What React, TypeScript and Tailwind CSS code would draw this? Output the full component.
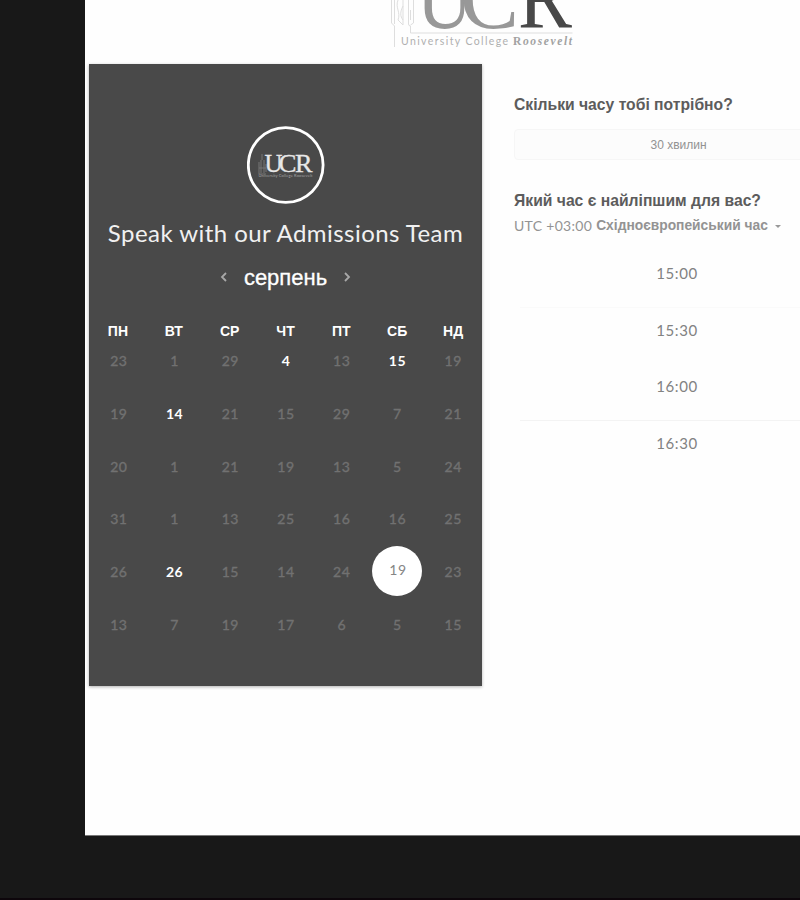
const weekdays = ['ПН', 'ВТ', 'СР', 'ЧТ', 'ПТ', 'СБ', 'НД'];

const weeks = [
  [23, 1, 29, 4, 13, 15, 19],
  [19, 14, 21, 15, 29, 7, 21],
  [20, 1, 21, 19, 13, 5, 24],
  [31, 1, 13, 25, 16, 16, 25],
  [26, 26, 15, 14, 24, 19, 23],
  [13, 7, 19, 17, 6, 5, 15],
];

const available = ['0-3', '0-5', '1-1', '4-1'];
const selected = '4-5';
const times = ['15:00', '15:30', '16:00', '16:30'];

const serif = "'Liberation Serif', serif";
const lato = 'Lato, sans-serif';

function Logo() {
  return (
    <svg className="block h-[52px] w-[200px]" viewBox="380 0 200 52">
      <g fill="none" stroke="#dedede" strokeWidth="1">
        <path d="M391.500 0v23l3 3v21M394.500 0v24M398 0c-3 8 3 12 0 20l5 5V0M403 6c-3 6-3 10 0 14M408.500 0v24q0 2 2 2v7h162M413.500 0v23l-3 2M410.500 10v10" />
      </g>
      <g fontFamily={serif}>
        <text x="416.500" y="27.500" fontSize="92" fill="#989898" textLength="56" lengthAdjust="spacingAndGlyphs">U</text>
        <text x="460" y="27.500" fontSize="92" fill="#989898" textLength="59" lengthAdjust="spacingAndGlyphs">C</text>
        <text x="518" y="28" fontSize="92" fill="#484848" textLength="54" lengthAdjust="spacingAndGlyphs">R</text>
      </g>
      <text x="401" y="45" fontSize="10.500" fontFamily={lato} fill="#b0b0b0" textLength="107">University College</text>
      <text x="513" y="45" fontSize="11.500" fontFamily={serif} fill="#a2a2a2" fontWeight="700" textLength="59">
        R<tspan fontStyle="italic">oosevelt</tspan>
      </text>
    </svg>
  );
}

function Badge() {
  return (
    <svg className="block h-[78px] w-[78px]" viewBox="246 126 78 78">
      <circle cx="284.700" cy="165" r="37.400" fill="none" stroke="#fff" strokeWidth="2.800" />
      <path d="M261 154v6M258 162v12M260 160v13M263 160v13M265 164v8M258 168h7M258 174h7" fill="none" stroke="#777" strokeWidth="1" />
      <g fontFamily={serif} fill="#e8e8e8" stroke="#e8e8e8" strokeWidth="0.300">
        <text x="263.500" y="171.500" fontSize="25" textLength="18" lengthAdjust="spacingAndGlyphs">U</text>
        <text x="277.500" y="171.500" fontSize="25" textLength="18" lengthAdjust="spacingAndGlyphs">C</text>
        <text x="294" y="171.500" fontSize="25" textLength="17.500" lengthAdjust="spacingAndGlyphs">R</text>
      </g>
      <text x="257.500" y="176.500" fontSize="4" fontFamily={lato} fill="#a5a5a5" textLength="54">University College Roosevelt</text>
    </svg>
  );
}

function Chevron({ d }: { d: string }) {
  return (
    <svg className="mb-[2px] h-3 w-2" viewBox="0 0 8 12" fill="none" stroke="#a8a8a8" strokeWidth="1.800">
      <path d={d} />
    </svg>
  );
}

function dayClass(key: string) {
  if (key === selected) return 'mb-px size-[50px] rounded-full bg-white pb-[3px] pl-px text-[#858585]';
  if (available.includes(key)) return 'font-bold text-white';
  return 'text-[#717171] [-webkit-text-stroke:0.35px_#717171]';
}

function Calendar() {
  return (
    <section className="flex h-[622px] w-[393px] shrink-0 flex-col items-center bg-[#494949] pt-[62px] shadow-[0_1px_3px_rgba(0,0,0,0.3)]">
      <Badge />
      <h1 className="mt-[13px] whitespace-nowrap font-[Lato,sans-serif] text-[24px] leading-8 tracking-[0.45px] text-[#f1f1f1]">
        Speak with our Admissions Team
      </h1>
      <div className="mt-[13px] flex h-8 items-center gap-4">
        <Chevron d="M6 2L2 6l4 4" />
        <span className="text-[22px] leading-8 text-white [-webkit-text-stroke:0.3px_white]">серпень</span>
        <Chevron d="M2 2l4 4-4 4" />
      </div>
      <div className="mt-[27px] grid w-[391px] grid-cols-7 text-center text-[14px] font-bold leading-5 text-white">
        {weekdays.map((d) => (
          <span key={d}>{d}</span>
        ))}
      </div>
      <div className="-mt-[6.600px] grid w-[391px] grid-cols-7 pl-[1px] font-[Lato,sans-serif] text-[14px] tracking-[0.5px]">
        {weeks.map((week, r) =>
          week.map((day, c) => (
            <div key={`${r}-${c}`} className="flex h-[52.700px] items-center justify-center">
              <span className={`flex items-center justify-center ${dayClass(`${r}-${c}`)}`}>{day}</span>
            </div>
          )),
        )}
      </div>
    </section>
  );
}

function Booking() {
  return (
    <section className="flex w-[330px] shrink-0 flex-col pt-[31px]">
      <h2 className="whitespace-nowrap text-[15.700px] font-bold leading-5 text-[#5c5c5c]">Скільки часу тобі потрібно?</h2>
      <div className="mt-[14px] flex h-[31px] items-center justify-center rounded-sm border border-[#f6f6f6] bg-[#fcfcfc] pr-px text-[12px] text-[#929292]">
        30 хвилин
      </div>
      <h2 className="mt-[31px] whitespace-nowrap text-[15.700px] font-bold leading-5 text-[#5c5c5c]">Який час є найліпшим для вас?</h2>
      <div className="mt-[4px] flex h-5 items-center whitespace-nowrap text-[13.800px] text-[#939393]">
        <span className="font-[Lato,sans-serif] text-[14px] tracking-[0.3px]">UTC +03:00</span>
        <span className="ml-1 mt-[2px] font-bold">Східноєвропейський час</span>
        <span className="ml-[7px] mt-[2px] border-x-[3.500px] border-t-[3px] border-x-transparent border-t-[#999]" />
      </div>
      <div className="ml-[6px] mt-[16px] flex w-[324px] flex-col">
        {times.map((time, i) => (
          <div
            key={time}
            className={`flex h-[56.600px] items-center justify-center border-b pb-[11px] pr-[10px] font-[Lato,sans-serif] text-[15px] tracking-[0.6px] text-[#828282] ${i === 2 ? 'border-[#f3f3f3]' : i === 0 ? 'border-[#fafafa]' : 'border-transparent'}`}
          >
            {time}
          </div>
        ))}
      </div>
    </section>
  );
}

export default function App() {
  return (
    <div className="flex h-[900px] w-[800px] flex-col justify-between overflow-hidden border-b-2 border-[#0d060b] bg-[#181818] pl-[85px] font-['Liberation_Sans',Arial,sans-serif]">
      <main className="flex h-[836px] w-[715px] shrink-0 flex-col overflow-hidden border-b border-[#777] bg-[#fefefe]">
        <header className="flex h-16 shrink-0 pl-[295px]">
          <Logo />
        </header>
        <div className="flex gap-8 pl-1">
          <Calendar />
          <Booking />
        </div>
      </main>
    </div>
  );
}
